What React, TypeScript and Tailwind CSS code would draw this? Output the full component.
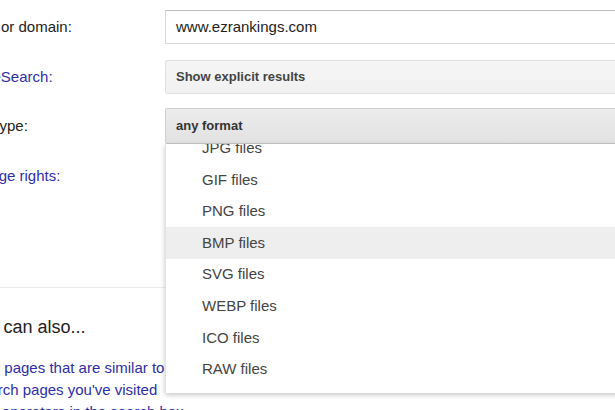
import React from "react";

const formats = ["JPG files", "GIF files", "PNG files", "BMP files", "SVG files", "WEBP files", "ICO files", "RAW files"];

export default function App() {
    return (
        <div className="relative w-[615px] h-[410px] overflow-hidden bg-white font-['Liberation_Sans',Arial,sans-serif] text-[15px] text-[#222]">
            <div className="ml-[-30px] w-[700px]">
                <div className="flex items-center mt-[10px] h-[34px]">
                    <div className="w-[195px] pl-[1px]">Site or domain:</div>
                    <div className="flex-1 h-full flex items-center px-[10px] border border-[#d9d9d9] border-t-[#c0c0c0] bg-white">
                        www.ezrankings.com
                    </div>
                </div>

                <div className="flex items-center mt-[16px] h-[34px]">
                    <div className="w-[195px] text-[#2e2eaa]">SafeSearch:</div>
                    <div className="flex-1 h-full flex items-center px-[10px] rounded-[2px] border border-[#e0e0e0] bg-gradient-to-b from-[#f5f5f5] to-[#f1f1f1] text-[13px] font-bold text-[#444]">
                        Show explicit results
                    </div>
                </div>

                <div className="flex items-center mt-[14px] h-[36px]">
                    <div className="w-[195px] ml-[-3px]">File type:</div>
                    <div className="relative flex-1 h-full ml-[3px]">
                        <div className="h-full flex items-center px-[10px] rounded-[2px] border border-[#d0d0d0] border-b-[#c4c4c4] bg-gradient-to-b from-[#ececec] to-[#e2e2e2] text-[13px] font-bold text-[#333]">
                            any format
                        </div>
                        <div className="absolute top-full left-0 w-[480px] z-10 overflow-hidden bg-white border-l border-[#e2e2e2] shadow-[0_2px_5px_rgba(0,0,0,0.22)] pb-[8px]">
                            <div className="mt-[-11.6px]">
                                {formats.map((f) => (
                                    <div
                                        key={f}
                                        className={
                                            "h-[31.6px] flex items-center pl-[36px] text-[#444] " +
                                            (f === "BMP files" ? "bg-[#eeeeee]" : "")
                                        }
                                    >
                                        {f}
                                    </div>
                                ))}
                            </div>
                        </div>
                    </div>
                </div>

                <div className="flex items-center mt-[18px] h-[28px]">
                    <div className="w-[195px] pl-[2px] text-[#2e2eaa]">Usage rights:</div>
                </div>

                <div className="mt-[97px] border-t border-[#ebebeb]" />

                <h3 className="mt-[27px] ml-[-2px] text-[18px] leading-[24px] text-[#222]">You can also...</h3>

                <ul className="mt-[18px] pl-[1px] leading-[22px] text-[#2e2eaa]">
                    <li>Find pages that are similar to, or link to, a URL</li>
                    <li>Search pages you've visited</li>
                    <li>Use operators in the search box</li>
                </ul>
            </div>
        </div>
    );
}
